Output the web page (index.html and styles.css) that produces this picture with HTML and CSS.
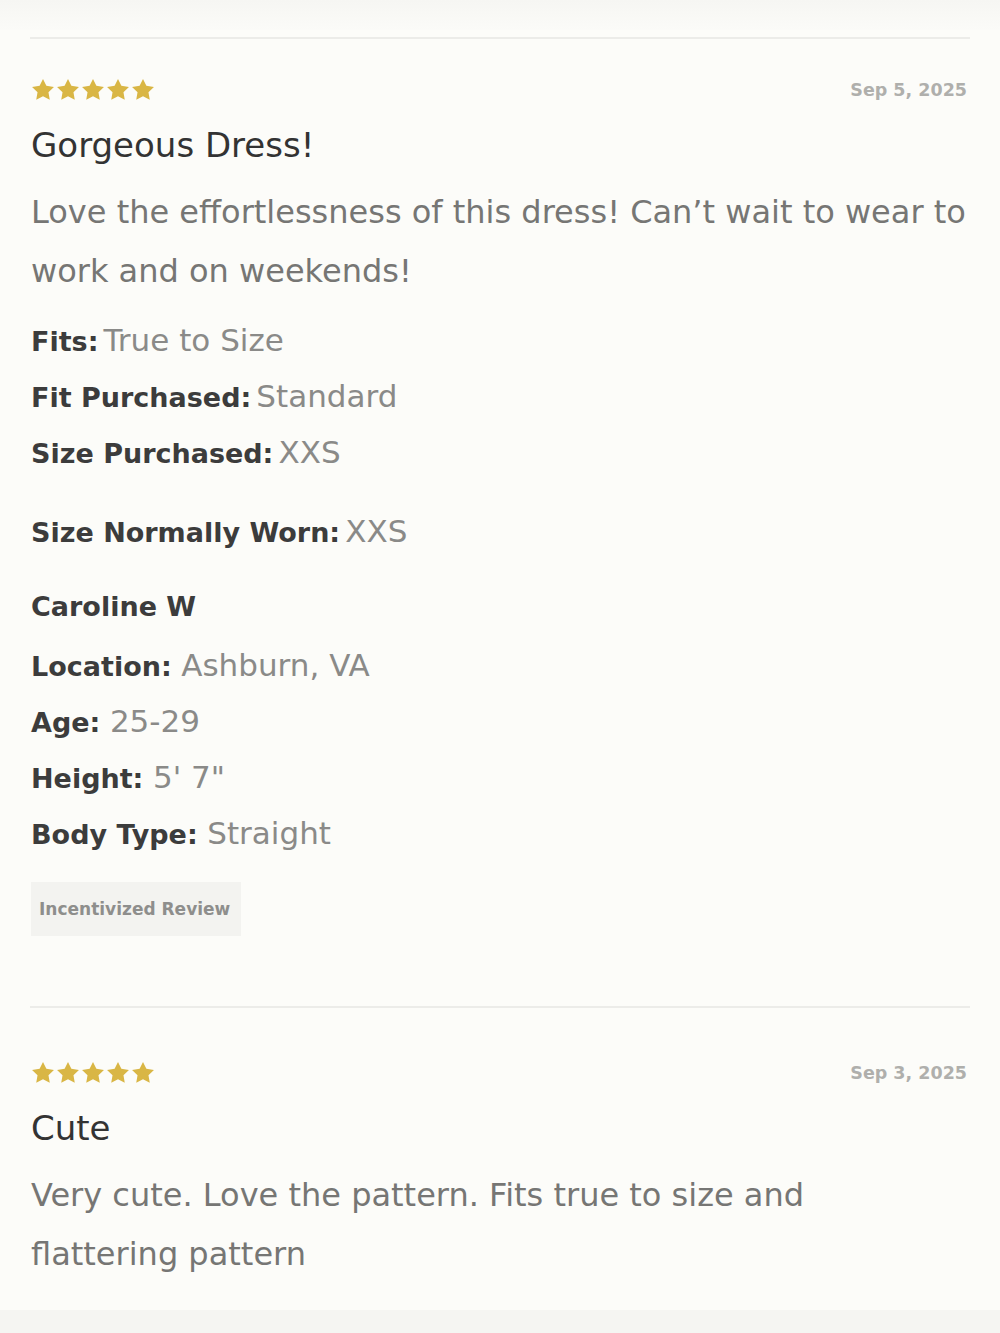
FILE: index.html
```html
<!DOCTYPE html>
<html lang="en">
<head>
<meta charset="utf-8">
<title>Reviews</title>
<link rel="stylesheet" href="styles.css">
</head>
<body>
<div class="page">
  <div class="top-band"></div>
  <div class="list">
    <hr class="divider">
    <article class="review review-first">
      <div class="review-head">
        <div class="stars" aria-label="5 stars">
          <svg class="star" viewBox="0 0 24 24"><path d="M12 1L15.38 7.85L22.94 8.95L17.47 14.28L18.76 21.8L12 18.25L5.24 21.8L6.53 14.28L1.06 8.95L8.62 7.85Z"/></svg>
          <svg class="star" viewBox="0 0 24 24"><path d="M12 1L15.38 7.85L22.94 8.95L17.47 14.28L18.76 21.8L12 18.25L5.24 21.8L6.53 14.28L1.06 8.95L8.62 7.85Z"/></svg>
          <svg class="star" viewBox="0 0 24 24"><path d="M12 1L15.38 7.85L22.94 8.95L17.47 14.28L18.76 21.8L12 18.25L5.24 21.8L6.53 14.28L1.06 8.95L8.62 7.85Z"/></svg>
          <svg class="star" viewBox="0 0 24 24"><path d="M12 1L15.38 7.85L22.94 8.95L17.47 14.28L18.76 21.8L12 18.25L5.24 21.8L6.53 14.28L1.06 8.95L8.62 7.85Z"/></svg>
          <svg class="star" viewBox="0 0 24 24"><path d="M12 1L15.38 7.85L22.94 8.95L17.47 14.28L18.76 21.8L12 18.25L5.24 21.8L6.53 14.28L1.06 8.95L8.62 7.85Z"/></svg>
        </div>
        <div class="date">Sep 5, 2025</div>
      </div>
      <h2 class="title">Gorgeous Dress!</h2>
      <p class="body">Love the effortlessness of this dress! Can’t wait to wear to work and on weekends!</p>
      <div class="fit">
        <div class="row"><span class="label">Fits:</span><span class="value tight">True to Size</span></div>
        <div class="row"><span class="label">Fit Purchased:</span><span class="value tight">Standard</span></div>
        <div class="row"><span class="label">Size Purchased:</span><span class="value tight">XXS</span></div>
      </div>
      <div class="row worn"><span class="label">Size Normally Worn:</span><span class="value tight">XXS</span></div>
      <div class="reviewer">
        <div class="row name"><span class="label">Caroline W</span></div>
        <div class="row"><span class="label">Location:</span> <span class="value">Ashburn, VA</span></div>
        <div class="row"><span class="label">Age:</span> <span class="value">25-29</span></div>
        <div class="row"><span class="label">Height:</span> <span class="value">5' 7"</span></div>
        <div class="row"><span class="label">Body Type:</span> <span class="value">Straight</span></div>
      </div>
      <div class="badge">Incentivized Review</div>
    </article>
    <hr class="divider">
    <article class="review review-next">
      <div class="review-head">
        <div class="stars" aria-label="5 stars">
          <svg class="star" viewBox="0 0 24 24"><path d="M12 1L15.38 7.85L22.94 8.95L17.47 14.28L18.76 21.8L12 18.25L5.24 21.8L6.53 14.28L1.06 8.95L8.62 7.85Z"/></svg>
          <svg class="star" viewBox="0 0 24 24"><path d="M12 1L15.38 7.85L22.94 8.95L17.47 14.28L18.76 21.8L12 18.25L5.24 21.8L6.53 14.28L1.06 8.95L8.62 7.85Z"/></svg>
          <svg class="star" viewBox="0 0 24 24"><path d="M12 1L15.38 7.85L22.94 8.95L17.47 14.28L18.76 21.8L12 18.25L5.24 21.8L6.53 14.28L1.06 8.95L8.62 7.85Z"/></svg>
          <svg class="star" viewBox="0 0 24 24"><path d="M12 1L15.38 7.85L22.94 8.95L17.47 14.28L18.76 21.8L12 18.25L5.24 21.8L6.53 14.28L1.06 8.95L8.62 7.85Z"/></svg>
          <svg class="star" viewBox="0 0 24 24"><path d="M12 1L15.38 7.85L22.94 8.95L17.47 14.28L18.76 21.8L12 18.25L5.24 21.8L6.53 14.28L1.06 8.95L8.62 7.85Z"/></svg>
        </div>
        <div class="date">Sep 3, 2025</div>
      </div>
      <h2 class="title">Cute</h2>
      <p class="body">Very cute. Love the pattern. Fits true to size and<br>flattering pattern</p>
    </article>
  </div>
  <div class="bottom-band"></div>
</div>
</body>
</html>
```

FILE: styles.css
```css
* { box-sizing: border-box; }

html, body {
  margin: 0;
  padding: 0;
  background: #fcfcf9;
}

body {
  font-family: "DejaVu Sans", "Liberation Sans", sans-serif;
  color: #3a3a3a;
}

.page {
  width: 1000px;
  height: 1333px;
  overflow: hidden;
  display: flex;
  flex-direction: column;
}

.top-band {
  height: 30px;
  background: linear-gradient(#f6f6f3, #fbfbf8);
  flex: none;
}

.list {
  padding: 0 30px;
  flex: 1;
}

.divider {
  margin: 0;
  border: 0;
  height: 2px;
  background: #ecece9;
}

.list > .divider:first-child {
  margin-top: 7px;
}

.review {
  display: flex;
  flex-direction: column;
  padding-left: 1px;
}

.review-first {
  padding-top: 40px;
  padding-bottom: 70px;
}

.review-next {
  padding-top: 54px;
}

.review-head {
  display: flex;
  justify-content: space-between;
  align-items: center;
  height: 22px;
}

.stars {
  display: flex;
  gap: 1px;
}

.star {
  width: 24px;
  height: 24px;
  fill: #d9b645;
}

.date {
  font-size: 17.5px;
  font-weight: 700;
  color: #afafac;
  margin-right: 3px;
}

.title {
  margin: 24px 0 0 0;
  font-size: 34px;
  line-height: 40px;
  font-weight: 400;
  color: #333333;
}

.body {
  margin: 18px 0 0 0;
  font-size: 32px;
  line-height: 59px;
  color: #767674;
  font-weight: 400;
}

.fit {
  margin-top: 11px;
}

.row {
  font-size: 30px;
  line-height: 56px;
  height: 56px;
  white-space: nowrap;
}

.label {
  font-size: 27px;
  font-weight: 700;
  color: #3c3c3c;
}

.value {
  font-size: 31px;
  font-weight: 400;
  color: #8a8a88;
}

.value.tight {
  margin-left: 5px;
}

.worn {
  margin-top: 23px;
}

.reviewer {
  margin-top: 19px;
}

.reviewer .name {
  margin-bottom: 3px;
}

.badge {
  align-self: flex-start;
  margin-top: 21px;
  height: 54px;
  padding: 0 11px 0 8px;
  display: flex;
  align-items: center;
  background: #f3f3f0;
  font-size: 17px;
  font-weight: 700;
  color: #8e8e8c;
}

.bottom-band {
  height: 23px;
  background: #f5f5f2;
  flex: none;
}
```
